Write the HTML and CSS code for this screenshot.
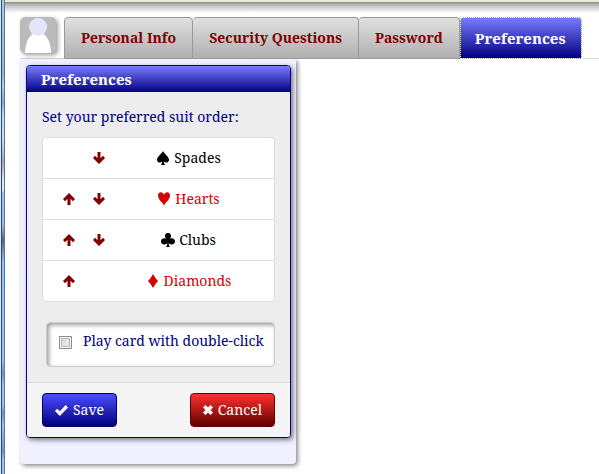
FILE: index.html
```html
<!DOCTYPE html>
<html lang="en">
<head>
    <meta charset="UTF-8">
    <meta name="viewport" content="width=device-width, initial-scale=1.0">
    <title>Preferences</title>
    <link rel="stylesheet" href="styles.css">
</head>
<body>
    <svg class="sprite" aria-hidden="true">
        <symbol id="up" viewBox="0 0 12 12"><path d="M6 0 12 6 10 8.2 7.5 5.8V12H4.5V5.8L2 8.2 0 6Z"/></symbol>
        <symbol id="down" viewBox="0 0 12 12"><path d="M6 12 0 6 2 3.8 4.5 6.2V0H7.5V6.2L10 3.8 12 6Z"/></symbol>
        <symbol id="spade" viewBox="0 0 12 14"><path d="M6 0C7 2.6 12 5.6 12 8.8 12 11.8 8.6 12.4 6.8 10.6 6.8 12 7.3 13 8.2 14H3.8C4.7 13 5.2 12 5.2 10.6 3.4 12.4 0 11.8 0 8.8 0 5.6 5 2.6 6 0Z"/></symbol>
        <symbol id="heart" viewBox="0 0 12 14"><path d="M6 14C5.4 10.8 0 8 0 3.6 0-.4 4.9-.8 6 3 7.1-.8 12-.4 12 3.6 12 8 6.6 10.8 6 14Z"/></symbol>
        <symbol id="club" viewBox="0 0 14 14"><path d="M7 0C9.2 0 10.6 2 9.9 3.9 9.7 4.7 9 5.5 8.2 6.2 10.6 4.3 14 5.7 14 8.5 14 11.8 9.7 12.6 7.7 10.1 7.7 12 8.1 13 9 14H5C5.9 13 6.3 12 6.3 10.1 4.3 12.6 0 11.8 0 8.5 0 5.7 3.4 4.3 5.8 6.2 5 5.5 4.3 4.7 4.1 3.9 3.4 2 4.8 0 7 0Z"/></symbol>
        <symbol id="diamond" viewBox="0 0 10 14"><path d="M5 0Q7 4 10 7 7 10 5 14 3 10 0 7 3 4 5 0Z"/></symbol>
        <symbol id="check" viewBox="0 0 12 10"><path d="M0 5.5 2 3.3 4.5 5.6 9.8 0 12 2.2 4.5 10Z"/></symbol>
        <symbol id="cross" viewBox="0 0 10 10"><path d="M0 2.5 2.5 0 5 2.5 7.5 0 10 2.5 7.5 5 10 7.5 7.5 10 5 7.5 2.5 10 0 7.5 2.5 5Z"/></symbol>
    </svg>

    <div class="page">
        <div class="tabs">
            <svg class="avatar" viewBox="0 0 36 36" aria-hidden="true">
                <path d="M5 36C5 24 11 15 18 15S31 24 31 36Z" fill="#fff"/>
                <circle cx="18" cy="10" r="9" fill="#e6e6fa"/>
            </svg>
            <a class="tab" href="#personal">Personal Info</a>
            <a class="tab" href="#security">Security Questions</a>
            <a class="tab" href="#password">Password</a>
            <a class="tab active" href="#preferences">Preferences</a>
        </div>

        <div class="panel">
            <form class="card">
                <h1>Preferences</h1>
                <div class="card-body">
                    <p>Set your preferred suit order:</p>
                    <ol class="suits">
                        <li>
                            <span class="arrow"></span>
                            <button class="arrow" type="button" aria-label="Move Spades down"><svg><use href="#down"/></svg></button>
                            <span class="suit"><svg><use href="#spade"/></svg>Spades</span>
                        </li>
                        <li>
                            <button class="arrow" type="button" aria-label="Move Hearts up"><svg><use href="#up"/></svg></button>
                            <button class="arrow" type="button" aria-label="Move Hearts down"><svg><use href="#down"/></svg></button>
                            <span class="suit red"><svg><use href="#heart"/></svg>Hearts</span>
                        </li>
                        <li>
                            <button class="arrow" type="button" aria-label="Move Clubs up"><svg><use href="#up"/></svg></button>
                            <button class="arrow" type="button" aria-label="Move Clubs down"><svg><use href="#down"/></svg></button>
                            <span class="suit"><svg><use href="#club"/></svg>Clubs</span>
                        </li>
                        <li>
                            <button class="arrow" type="button" aria-label="Move Diamonds up"><svg><use href="#up"/></svg></button>
                            <span class="arrow"></span>
                            <span class="suit red"><svg><use href="#diamond"/></svg>Diamonds</span>
                        </li>
                    </ol>
                    <div class="option">
                        <input type="checkbox" id="dblclick">
                        <label for="dblclick">Play card with double-click</label>
                    </div>
                </div>
                <div class="card-footer">
                    <button class="button save" type="submit"><svg><use href="#check"/></svg>Save</button>
                    <button class="button cancel" type="button"><svg><use href="#cross"/></svg>Cancel</button>
                </div>
            </form>
        </div>
    </div>
</body>
</html>
```

FILE: styles.css
```css
* {
    box-sizing: border-box;
}
body {
    margin: 0;
    min-height: 100vh;
    display: flex;
    font-family: "Droid Serif", "Noto Serif", "DejaVu Serif Condensed", "DejaVu Serif", serif;
    font-size: 14px;
    line-height: 20px;
    color: #000080;
    background-color: #fff;
}
/* window edge on the left */
body::before {
    content: "";
    width: 5px;
    flex: none;
    background: linear-gradient(to right, #dde6ee 1px, #344a66 1px, #344a66 2px, transparent 2px, transparent 4px, #56779c 4px),
        linear-gradient(#a3cdf6 0, #8fb4d8 75px, #a8d0f7 85px, #8aa6d4 102px, #b8dcf8 115px, #c4def4 140px, #a8a0bc 162px, #d8e6f2 180px, #d8e6f2 191px, #92c4f4 192px, #8fc0f0 225px, #55647f 240px, #8fc4f4 262px, #93c4f3 360px, #6c98c9 373px, #93c4f3 385px, #93c4f3 405px, #6c98c9 413px, #93c4f3 425px, #6c98c9 451px, #93c4f3 460px);
}
.sprite {
    display: none;
}
svg {
    fill: currentColor;
}
.page {
    flex: 1;
    min-width: 0;
    border-top: 2px solid #ece9d8;
    background: linear-gradient(#8c8c8c, #c4c4c4 4px, #fff 11px);
    padding: 15px 0 10px 15px;
}
.tabs {
    display: flex;
    border-bottom: 1px solid #ddd;
}
.avatar {
    width: 36px;
    height: 36px;
    flex: none;
    margin-right: 8px;
    border-radius: 5px;
    background-color: #bbb;
    box-shadow: 2px 2px 4px rgba(0, 0, 0, 0.4);
}
.tab {
    height: 42px;
    margin-bottom: -1px;
    padding: 10px 16px;
    border: 1px solid #999;
    border-left-width: 0;
    border-radius: 4px 4px 0 0;
    background: linear-gradient(#e0e0e0, #b0b0b0);
    color: #800000;
    font-weight: bold;
    text-decoration: none;
    white-space: nowrap;
}
.avatar + .tab {
    border-left-width: 1px;
}
.tab.active {
    padding: 10px 15px;
    background: linear-gradient(#7b7bff, #000080);
    color: #fff;
    font-size: 15px;
    outline: 1px dotted #fff;
    outline-offset: -1px;
}
.panel {
    width: 276px;
    padding: 6px 5px 26px 6px;
    border-radius: 0 0 4px 4px;
    background-color: #f0f0ff;
    box-shadow: 2px 2px 4px rgba(0, 0, 0, 0.45);
}
.card {
    border: 1px solid #000080;
    border-radius: 4px;
    background-color: #ededed;
    box-shadow: 2px 2px 5px rgba(0, 0, 0, 0.5);
    overflow: hidden;
}
.card h1 {
    margin: 0;
    padding: 3px 14px;
    background: linear-gradient(#7b7bff, #000080);
    color: #fff;
    font-size: 15px;
}
.card-body {
    padding: 15px;
}
.card-body p {
    margin: 0 0 10px;
    white-space: nowrap;
}
.suits {
    list-style: none;
    margin: 0 0 20px;
    padding: 0;
    border: 1px solid #ddd;
    border-radius: 4px;
    background-color: #fff;
    color: #000;
}
.suits li {
    display: flex;
    align-items: center;
    padding: 10px 11px;
}
.suits li + li {
    border-top: 1px solid #ddd;
}
.arrow {
    width: 30px;
    padding: 0;
    border: 0;
    background: none;
    color: #800000;
    line-height: 0;
    cursor: pointer;
}
.arrow svg {
    width: 12px;
    height: 12px;
}
.suit {
    flex: 1;
    display: flex;
    align-items: center;
    justify-content: center;
    gap: 4px;
}
.suit svg {
    width: 14px;
    height: 14px;
}
.red {
    color: #d80000;
}
.option {
    display: flex;
    gap: 11px;
    margin-left: 4px;
    padding: 8px 10px 15px 12px;
    border: 1px solid #ccc;
    border-radius: 4px;
    background-color: #fff;
    box-shadow: inset 2px 2px 4px rgba(0, 0, 0, 0.4);
    white-space: nowrap;
}
.option input {
    appearance: none;
    flex: none;
    width: 13px;
    height: 13px;
    margin: 5px 0 0;
    border: 1px solid #8e8f8f;
    background: linear-gradient(135deg, #ccd0d5, #f6f6f6);
    box-shadow: inset 0 0 0 1px #f4f4f4, inset 0 0 0 2px #b8bcc2;
}
.option input:checked {
    background: #000080;
}
.card-footer {
    display: flex;
    justify-content: space-between;
    padding: 10px 15px;
    border-top: 1px solid #ddd;
    background-color: #f5f5f5;
}
.button {
    display: flex;
    align-items: center;
    gap: 5px;
    height: 34px;
    padding: 0 12px;
    border: 1px solid #000060;
    border-radius: 4px;
    color: #fff;
    font: inherit;
    cursor: pointer;
}
.save {
    background: linear-gradient(#4c4cff, #000080);
}
.save svg {
    width: 13px;
    height: 11px;
}
.cancel {
    border-color: #600000;
    background: linear-gradient(#ff3030, #600000);
}
.cancel svg {
    width: 10px;
    height: 10px;
}
```
